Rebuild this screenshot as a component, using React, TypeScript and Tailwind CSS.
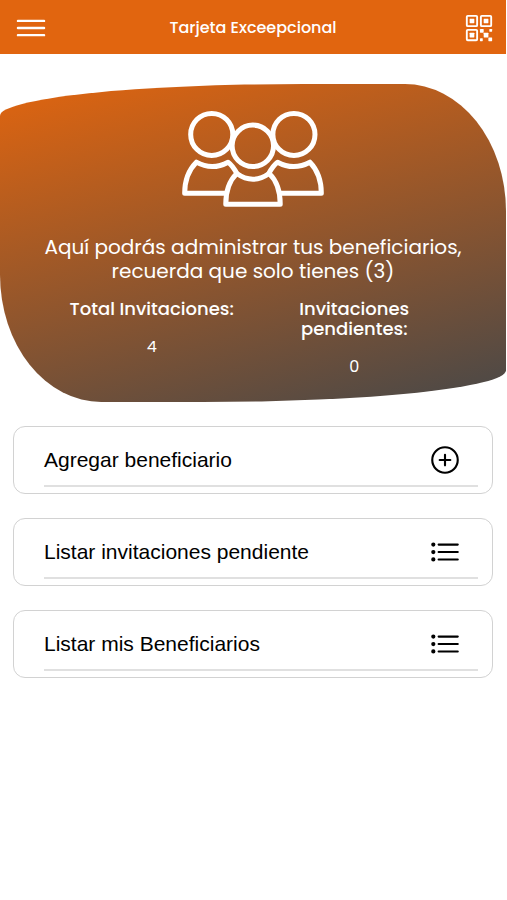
import React from 'react';
import {
  IoAddCircleOutline,
  IoListOutline,
  IoMenuOutline,
  IoQrCodeOutline,
} from 'react-icons/io5';

const PeopleIcon: React.FC = () => (
  <svg
    className="h-[97px] w-[142px]"
    viewBox="37 46 425 290"
    fill="none"
    stroke="currentColor"
    strokeWidth="15"
    strokeLinejoin="round"
    aria-hidden="true"
  >
    <circle cx="126" cy="119" r="63" />
    <circle cx="372" cy="119" r="63" />
    <circle cx="249" cy="153" r="62" />
    <path d="M202 237 C194 222 186 210 175 202 Q127 228 80 202 C56 226 45 260 45 295 H168" />
    <path d="M296 237 C304 222 312 210 323 202 Q371 228 420 202 C443 226 454 260 454 295 H331" />
    <path d="M201 236 Q249 270 298 236 C321 258 331 290 331 328 H168 C168 290 178 258 201 236 Z" />
  </svg>
);

const App: React.FC = () => {
  const stats = [
    { title: 'Total Invitaciones:', value: 4 },
    { title: 'Invitaciones pendientes:', value: 0 },
  ];

  const options = [
    { label: 'Agregar beneficiario', icon: IoAddCircleOutline },
    { label: 'Listar invitaciones pendiente', icon: IoListOutline },
    { label: 'Listar mis Beneficiarios', icon: IoListOutline },
  ];

  return (
    <div className="min-h-screen bg-white pr-px font-[Poppins,Inter,sans-serif]">
      {/* Top bar */}
      <header className="flex h-[54px] items-center justify-between bg-[#e1650f] px-3 pt-0.5 text-white">
        <button type="button" aria-label="Menú" className="w-10">
          <IoMenuOutline size={38} />
        </button>
        <h1 className="text-base font-medium">Tarjeta Exceepcional</h1>
        <button type="button" aria-label="Código QR" className="flex w-10 justify-end">
          <IoQrCodeOutline size={30} />
        </button>
      </header>

      <main>
        {/* Summary */}
        <section className="mt-[30px] flex min-h-[318px] flex-col items-center rounded-[60%_20%_60%_20%/10%_40%_10%_40%] bg-[linear-gradient(165deg,#e1650f_0%,#484848_100%)] px-[8%] pt-[26px] text-center text-white">
          <PeopleIcon />
          <p className="mt-7 text-xl leading-6">
            Aquí podrás administrar tus beneficiarios, recuerda que solo tienes (3)
          </p>
          <dl className="mt-4 grid w-full grid-cols-2 px-2.5">
            {stats.map((stat) => (
              <div key={stat.title} className="px-4">
                <dt className="text-lg leading-5 font-medium">{stat.title}</dt>
                <dd className="mt-4 text-base">{stat.value}</dd>
              </div>
            ))}
          </dl>
        </section>

        {/* Options */}
        <nav className="mt-6 flex flex-col gap-6 px-[13px] font-[Liberation_Sans,Arial,sans-serif]">
          {options.map(({ label, icon: Icon }) => (
            <button
              key={label}
              type="button"
              className="flex h-[68px] rounded-xl border border-[#d2d2d2] pr-3.5 pl-[30px] text-left text-black"
            >
              <span className="flex h-[60px] flex-1 items-center justify-between border-b-2 border-[#e0e0e0] pt-2 pr-4">
                <span className="text-[21px]">{label}</span>
                <Icon size={34} />
              </span>
            </button>
          ))}
        </nav>
      </main>
    </div>
  );
};

export default App;
